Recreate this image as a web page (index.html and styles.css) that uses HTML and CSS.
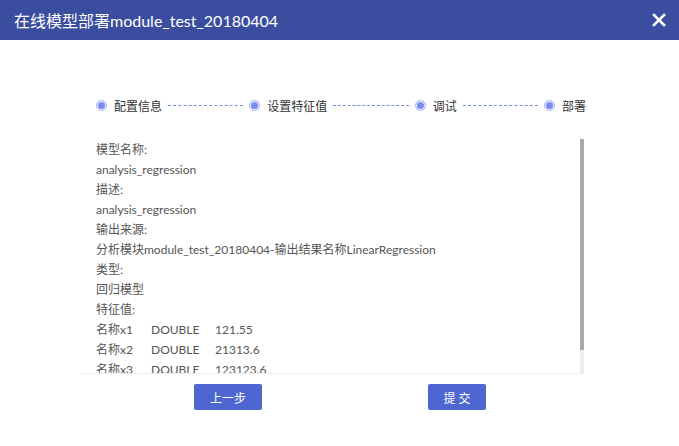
FILE: index.html
```html
<!DOCTYPE html>
<html lang="zh">
<head>
<meta charset="utf-8">
<title>在线模型部署</title>
<link rel="stylesheet" href="styles.css">
</head>
<body>
<div class="dialog">
  <div class="header">
    <span class="title">在线模型部署module_test_20180404</span>
    <svg class="close" width="14" height="14" viewBox="0 0 14 14"><path d="M2 2 L12 12 M12 2 L2 12" stroke="#fff" stroke-width="2.6" stroke-linecap="square"/></svg>
  </div>
  <div class="steps">
    <div class="step"><span class="dot"></span><span class="label">配置信息</span></div>
    <div class="dash"></div>
    <div class="step"><span class="dot"></span><span class="label">设置特征值</span></div>
    <div class="dash"></div>
    <div class="step"><span class="dot"></span><span class="label">调试</span></div>
    <div class="dash"></div>
    <div class="step"><span class="dot"></span><span class="label">部署</span></div>
  </div>
  <div class="scroll">
    <div class="content">
      <div class="line">模型名称:</div>
      <div class="line">analysis_regression</div>
      <div class="line">描述:</div>
      <div class="line">analysis_regression</div>
      <div class="line">输出来源:</div>
      <div class="line">分析模块module_test_20180404-输出结果名称LinearRegression</div>
      <div class="line">类型:</div>
      <div class="line">回归模型</div>
      <div class="line">特征值:</div>
      <div class="line row"><span class="c1">名称x1</span><span class="c2">DOUBLE</span><span>121.55</span></div>
      <div class="line row"><span class="c1">名称x2</span><span class="c2">DOUBLE</span><span>21313.6</span></div>
      <div class="line row"><span class="c1">名称x3</span><span class="c2">DOUBLE</span><span>123123.6</span></div>
    </div>
    <div class="track"><div class="thumb"></div></div>
  </div>
  <div class="actions">
    <button class="btn prev">上一步</button>
    <button class="btn submit">提 交</button>
  </div>
</div>
</body>
</html>
```
FILE: styles.css
```css
html, body {
  margin: 0;
  padding: 0;
  background: #fff;
}
body {
  font-family: "Lato", "Noto Sans CJK SC", sans-serif;
  width: 679px;
  height: 446px;
  overflow: hidden;
}
.header {
  height: 40px;
  background: #3a4d9e;
  display: flex;
  align-items: center;
  justify-content: space-between;
  padding: 0 13px 0 14px;
}
.title {
  color: #fff;
  font-size: 16px;
  font-family: "Lato", "Noto Sans CJK SC", sans-serif;
}
.close {
  display: block;
}
.steps {
  display: flex;
  align-items: center;
  margin: 55px 93px 0 96px;
  height: 20px;
}
.step {
  display: flex;
  align-items: center;
}
.dot {
  width: 11px;
  height: 11px;
  box-sizing: border-box;
  border-radius: 50%;
  border: 1px solid #b3bdf5;
  background: #7b8cf0;
  box-shadow: inset 0 0 0 1px #fff;
  margin-right: 7px;
}
.label {
  font-size: 12px;
  color: #333;
}
.dash {
  flex: 1;
  border-top: 1px dashed #7b8cf0;
  margin: 0 6px;
}
.scroll {
  margin: 24px 95px 0 80px;
  height: 234px;
  display: flex;
  border-bottom: 1px solid #eeeeee;
}
.content {
  flex: 1;
  overflow: hidden;
  padding-left: 16px;
  font-size: 12px;
  color: #555;
}
.track {
  width: 4px;
  background: #eeeeee;
}
.thumb {
  height: 211px;
  background: #aaaaaa;
}
.line {
  height: 20px;
  line-height: 20px;
  white-space: nowrap;
}
.line:first-child {
  margin-top: 1px;
}
.row .c1 {
  display: inline-block;
  width: 55px;
}
.row .c2 {
  display: inline-block;
  width: 64px;
}
.actions {
  display: flex;
  margin: 10px 0 0 194px;
  gap: 166px;
}
.btn {
  height: 26px;
  border: none;
  border-radius: 2px;
  background: #4e66cf;
  color: #fff;
  font-size: 12px;
  font-family: "Lato", "Noto Sans CJK SC", sans-serif;
  padding: 0;
}
.prev {
  width: 68px;
}
.submit {
  width: 58px;
}
```
